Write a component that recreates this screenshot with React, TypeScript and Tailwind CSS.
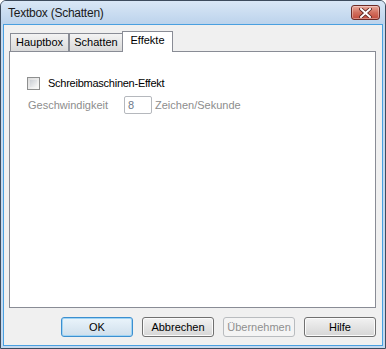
import React from 'react';

const tabs = [
  { name: 'Hauptbox', width: 'w-[59px]' },
  { name: 'Schatten', width: 'w-[54px]' },
];

const buttons = [
  { label: 'OK', kind: 'default' },
  { label: 'Abbrechen', kind: 'normal' },
  { label: 'Übernehmen', kind: 'disabled' },
  { label: 'Hilfe', kind: 'normal' },
];

const CloseButton: React.FC = () => (
  <div className="w-[29px] h-[15px] rounded-[3px] border border-[#6b2a26] bg-gradient-to-b from-[#e9a99c] via-[#d2705f] to-[#c2493a] flex items-center justify-center shadow-[inset_0_0_0_1px_rgba(255,255,255,0.35)]">
    <svg width="13" height="10" viewBox="0 0 13 10">
      <path
        d="M2 1 L11 9 M11 1 L2 9"
        stroke="#5b2420"
        strokeWidth="3.6"
        strokeLinecap="square"
      />
      <path
        d="M2 1 L11 9 M11 1 L2 9"
        stroke="#ffffff"
        strokeWidth="2"
        strokeLinecap="square"
      />
    </svg>
  </div>
);

const App: React.FC = () => {
  return (
    <div className="w-[386px] h-[349px] bg-[#c4d9ef] border border-[#3d4b5d] rounded-t-[6px] flex flex-col overflow-hidden font-['Liberation_Sans',Arial,sans-serif] text-[11px] text-black">
      {/* Title bar */}
      <div className="h-[24px] flex items-center pl-[7px] pr-[5px] bg-gradient-to-b from-[#d9e7f6] to-[#bcd3ec]">
        <span className="flex-1 text-[12px] tracking-[-0.25px] text-[#1a1a1a]">Textbox (Schatten)</span>
        <CloseButton />
      </div>

      {/* Client area */}
      <div className="flex-1 mx-[2px] mb-[2px] border border-[#4aa0e0] bg-[#f0f0f0] pl-[5px] pt-[6px] pb-[8px] flex flex-col">
        {/* Tab strip */}
        <div className="h-[20px] flex items-end pl-[1px]">
          {tabs.map((tab) => (
            <div
              key={tab.name}
              className={`${tab.width} h-[18px] border-t border-l border-r border-[#898c95] bg-gradient-to-b from-[#f3f3f3] to-[#dadada] flex items-center justify-center pb-[1px]`}
            >
              {tab.name}
            </div>
          ))}
          <div className="w-[51px] h-[21px] -ml-[1px] -mb-[1px] relative z-10 border-t border-l border-r border-[#898c95] bg-white flex items-center justify-center pb-[3px]">
            Effekte
          </div>
        </div>

        {/* Tab panel */}
        <div className="w-[367px] h-[257px] border border-[#898c95] bg-white flex flex-col pl-[17px] pt-[25px]">
          <div className="flex items-center h-[13px]">
            <div className="w-[13px] h-[13px] border border-[#8e8f8f] bg-gradient-to-br from-[#dcdcdc] to-[#fbfbfb] p-[2px]">
              <div className="w-full h-full bg-gradient-to-br from-[#cbcfd5] to-[#f6f6f6]" />
            </div>
            <span className="ml-[8px] tracking-[-0.25px]">Schreibmaschinen-Effekt</span>
          </div>
          <div className="flex items-center mt-[6px] ml-[1px] text-[#8d8d8d]">
            <span className="w-[96px]">Geschwindigkeit</span>
            <div className="w-[28px] h-[18px] border border-[#b5b8bd] rounded-[2px] bg-white flex items-center pl-[3px] text-[#6d7a8a]">
              8
            </div>
            <span className="ml-[3px]">Zeichen/Sekunde</span>
          </div>
        </div>

        {/* Buttons */}
        <div className="w-[367px] mt-[9px] flex justify-end gap-[9px]">
          {buttons.map((b) => (
            <div
              key={b.label}
              className={
                b.kind === 'default'
                  ? 'w-[72px] h-[20px] rounded-[3px] border border-[#3c8fd0] bg-gradient-to-b from-[#eaf4fb] to-[#cfdfec] shadow-[inset_0_0_0_1px_#9fd4f4] flex items-center justify-center'
                  : b.kind === 'disabled'
                    ? 'w-[72px] h-[20px] rounded-[3px] border border-[#b9bcbf] bg-[#f4f4f4] text-[#8f8f8f] flex items-center justify-center'
                    : 'w-[72px] h-[20px] rounded-[3px] border border-[#707070] bg-gradient-to-b from-[#f2f2f2] to-[#d6d6d6] shadow-[inset_0_0_0_1px_#fbfbfb] flex items-center justify-center'
              }
            >
              {b.label}
            </div>
          ))}
        </div>
      </div>
    </div>
  );
};

export default App;
